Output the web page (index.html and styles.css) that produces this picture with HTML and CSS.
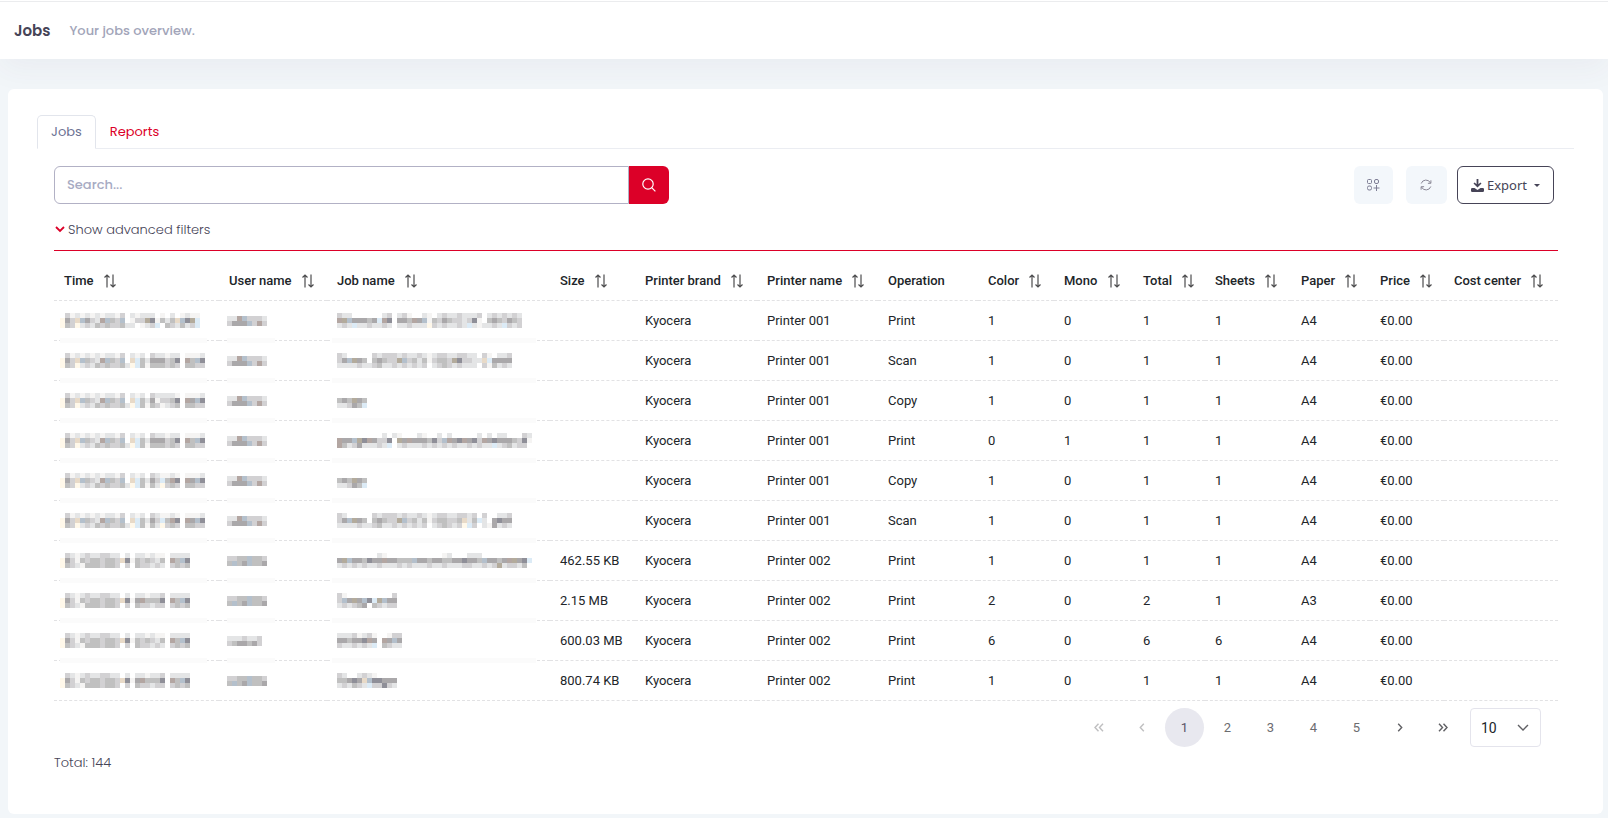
FILE: index.html
```html
<!DOCTYPE html>
<html lang="en">
<head>
  <meta charset="UTF-8">
  <title>Jobs</title>
  <link rel="stylesheet" href="styles.css">
</head>
<body>

  <svg class="sprite" aria-hidden="true">
    <symbol id="sort" viewBox="0 0 14 14">
      <path d="M4 13.5V1M1.500 3.500L4 1l2.500 2.500M10 .5V13M7.500 10.500L10 13l2.500-2.500" fill="none" stroke="currentColor" stroke-width="1.200"/>
    </symbol>
  </svg>

  <header class="subheader">
    <h1>Jobs</h1>
    <span class="subtitle">Your jobs overview.</span>
  </header>

  <main class="card">
    <nav class="tabs">
      <a class="tab active" href="#jobs">Jobs</a>
      <a class="tab" href="#reports">Reports</a>
    </nav>

    <section class="content">
      <div class="toolbar">
        <form class="search">
          <input type="text" id="search" placeholder="Search..." aria-label="Search">
          <button type="button" aria-label="Search">
            <svg width="14" height="14" viewBox="0 0 14 14" fill="none" stroke="#fff" stroke-width="1.200"><circle cx="6" cy="6" r="5.200"/><path d="M9.700 9.700l3.700 3.700"/></svg>
          </button>
        </form>
        <div class="actions">
          <button class="btn-light" type="button" aria-label="Columns">
            <svg width="12" height="12" viewBox="0 0 12 12" fill="none" stroke="#7e7e95"><rect x=".5" y=".5" width="4" height="4" rx="1"/><rect x="7.500" y=".5" width="4" height="4" rx="1.500"/><rect x=".5" y="7" width="4" height="4" rx="1.500"/><path d="M9.500 6v6M6.500 9h6"/></svg>
          </button>
          <button class="btn-light refresh" type="button" aria-label="Refresh">
            <svg width="12" height="12" viewBox="0 0 12 12" fill="none" stroke="#8a8796"><path d="M1.200 4.500A5 5 0 0 1 10.500 4M10.800 7.500A5 5 0 0 1 1.500 8"/><path d="M10.900 1.300v3h-3M1.100 10.700v-3h3"/></svg>
          </button>
          <button class="btn-export" type="button">
            <svg width="13" height="13" viewBox="0 0 13 13" fill="#464457"><path d="M5.600 0h1.800v5.300l2-1.900 1.100 1.200-4 3.900-4-3.900 1.100-1.200 2 1.900z"/><path d="M1.200 9h2.300l3 2 3-2h2.300q1.200 0 1.200 1.200v1.600Q13 13 11.800 13H1.200Q0 13 0 11.800v-1.600Q0 9 1.200 9z"/></svg>
            <span>Export</span>
            <i class="caret"></i>
          </button>
        </div>
      </div>

      <a class="advanced" href="#filters">
        <svg width="10" height="7" viewBox="0 0 10 7" fill="none" stroke="#dc0028" stroke-width="1.800"><path d="M1 1l4 4 4-4"/></svg>
        Show advanced filters
      </a>

      <table class="jobs">
        <colgroup>
          <col class="c-time"><col class="c-user"><col class="c-job"><col class="c-size"><col class="c-brand"><col class="c-printer"><col class="c-op">
          <col class="c-color"><col class="c-mono"><col class="c-total"><col class="c-sheets"><col class="c-paper"><col class="c-price"><col class="c-cost">
        </colgroup>
        <thead>
          <tr>
            <th>Time <svg><use href="#sort"/></svg></th>
            <th>User name <svg><use href="#sort"/></svg></th>
            <th>Job name <svg><use href="#sort"/></svg></th>
            <th>Size <svg><use href="#sort"/></svg></th>
            <th>Printer brand <svg><use href="#sort"/></svg></th>
            <th>Printer name <svg><use href="#sort"/></svg></th>
            <th>Operation</th>
            <th>Color <svg><use href="#sort"/></svg></th>
            <th>Mono <svg><use href="#sort"/></svg></th>
            <th>Total <svg><use href="#sort"/></svg></th>
            <th>Sheets <svg><use href="#sort"/></svg></th>
            <th>Paper <svg><use href="#sort"/></svg></th>
            <th>Price <svg><use href="#sort"/></svg></th>
            <th>Cost center <svg><use href="#sort"/></svg></th>
          </tr>
        </thead>
        <tbody id="rows"></tbody>
      </table>

      <div class="paginator">
        <button type="button" disabled aria-label="First page"><svg width="10" height="9" viewBox="0 0 10 9"><path d="M4.500.8L1 4.500l3.500 3.700M9 .8L5.500 4.500 9 8.200"/></svg></button>
        <button type="button" disabled aria-label="Previous page"><svg width="6" height="9" viewBox="0 0 6 9"><path d="M4.800.8L1.300 4.500l3.500 3.700"/></svg></button>
        <button type="button" class="current">1</button>
        <button type="button">2</button>
        <button type="button">3</button>
        <button type="button">4</button>
        <button type="button">5</button>
        <button type="button" aria-label="Next page"><svg width="6" height="9" viewBox="0 0 6 9"><path d="M1.200.8l3.500 3.700-3.500 3.700"/></svg></button>
        <button type="button" aria-label="Last page"><svg width="10" height="9" viewBox="0 0 10 9"><path d="M1 .8l3.500 3.700L1 8.200M5.500.8L9 4.500 5.500 8.200"/></svg></button>
        <label class="page-size">
          <select aria-label="Rows per page"><option>10</option><option>25</option><option>50</option></select>
          <svg width="12" height="8" viewBox="0 0 12 8"><path d="M1 1l5 5 5-5"/></svg>
        </label>
      </div>

      <div class="total">Total: 144</div>
    </section>
  </main>

  <script src="jobs.js"></script>
</body>
</html>
```

FILE: jobs.js
```js
// Private values are shown as blocks. One letter is one 5px block.
const shades = {
  w: '#f5f4f3', a: '#e4e5e6', b: '#d2d1d3', c: '#c0c0c0', d: '#aaa8aa', e: '#8f8f98',
  y: '#fff8ea', p: '#e8dac8', s: '#dcebf6', l: '#b4c0cc', r: '#b3a6a2', k: '#b3ab9c'
};

const times = {
  t1: ['.bwawawawaawb.awaaa.w.a.waww', 'ydbpldbarlcbl.wbbkewcacpleks', 'ycbyabacbcbbcaa.wabs.cbacabs'],
  t2: ['.bwawawawaawb.awa.baawaa.wwwa', 'ydbplcbarlcbl.pscadddbce.rcle', 'ycbyabacbcbbcayscwcccbcb.ccbb'],
  t3: ['.bwawawawaawb.awa.baaaaw.wwwa', 'ydbplcbarlcbl.pscadwbbce.rdle', 'ycbyabacbcbbcayscwcbwabc.ccbb'],
  t4: ['.bwawawawaawb.awa.bawwaw.wwwa', 'ydbplcbarlcbl.pscadbscre.rdle', 'ycbyabacbcbbcayscwcaybcb.ccbb'],
  t5: ['.bawabaabbaa.a.aawaww.aaaa', 'ydbwcbccbccbpewcbcbac.rcle', 'ycbawcccbccb.b.cbbaba.bcbc'],
  t6: ['.bawabaabbaa.a.aawaab.aaaa', 'ydbwcbccbccbpewdrccce.rcle', 'ycbawcccbccb.b.cbbabb.bcbc']
};

const users = {
  u1: ['aarlbbba', 'bdddlbrb'],
  u2: ['bbcclccb', 'clcdlccd'],
  u3: ['aaabaab', 'bcddcdb']
};

const names = {
  n1: ['baa......ab.abw..aw.abaabaaab.abababa', 'rkldddcdsre.ddcrdlwcbdcbbabew.cdcbdcb', 'abasaabaaba.aabaaaybabaabasawaabasbab'],
  n2: ['ba.....babbbabaabawabbaabbaa.bw.aab', 'bdlkdc.cdcbbklbcacwbccbkebbaapsdddd', 'aaaabaabcaabababab.abcbabaaa.bwcaba'],
  n3: ['......', 'cdckdc', 'aabdcs'],
  n4: ['.........a.aw...aw..a.a.....a.a.aa...ba', 'rddlkerdbbe.kdrdddceblrderdebrdedddcbew', 'rcabdaaabas.abaaababababaababaasabcabb.'],
  n5: ['ba.....babbbabaabawabbaabbab.b..aab', 'bdlkdc.cdcbbklbcacwbccbbcpacsa.dedd', 'aaaabaabcaabababab.abcbabysb.awdaba'],
  n6: ['........aw...........wa...aaa', 'dklddceddrddccclddcddccddeddclddcdrkdes', 'abababaabaaababaaabaabaaabbaababkabbac'],
  n7: ['bw.........b', 'bldkdleskldd', 'ababcd.cbabb'],
  n8: ['aaabwabw..wbb', 'ddcdderd.rdld', 'baababas.cbaa'],
  n9: ['ba..abaw....', 'ccdedpleeddd', 'abacbasbbeba']
};

const jobs = [
  ['t1', 'u1', 'n1', '', '001', 'Print', 1, 0, 1, 1, 'A4'],
  ['t2', 'u1', 'n2', '', '001', 'Scan', 1, 0, 1, 1, 'A4'],
  ['t3', 'u1', 'n3', '', '001', 'Copy', 1, 0, 1, 1, 'A4'],
  ['t2', 'u1', 'n4', '', '001', 'Print', 0, 1, 1, 1, 'A4'],
  ['t4', 'u1', 'n3', '', '001', 'Copy', 1, 0, 1, 1, 'A4'],
  ['t4', 'u1', 'n5', '', '001', 'Scan', 1, 0, 1, 1, 'A4'],
  ['t5', 'u2', 'n6', '462.55 KB', '002', 'Print', 1, 0, 1, 1, 'A4'],
  ['t6', 'u2', 'n7', '2.15 MB', '002', 'Print', 2, 0, 2, 1, 'A3'],
  ['t5', 'u3', 'n8', '600.03 MB', '002', 'Print', 6, 0, 6, 6, 'A4'],
  ['t6', 'u2', 'n9', '800.74 KB', '002', 'Print', 1, 0, 1, 1, 'A4']
];

function blocks(lines) {
  const size = 5;
  const width = Math.max(...lines.map(line => line.length)) * size;
  let rects = '';
  lines.forEach((line, y) => {
    [...line].forEach((letter, x) => {
      if (shades[letter]) {
        rects += `<rect x="${x * size}" y="${y * size}" width="${size}" height="${size}" fill="${shades[letter]}"/>`;
      }
    });
  });
  return `<svg width="${width}" height="${lines.length * size}" shape-rendering="crispEdges">${rects}</svg>`;
}

document.getElementById('rows').innerHTML = jobs.map(job => {
  const [time, user, name, size, printer, ...rest] = job;
  return `
    <tr>
      <td class="hidden-time">${blocks(times[time])}</td>
      <td class="hidden-user">${blocks(users[user])}</td>
      <td class="hidden-name">${blocks(names[name])}</td>
      <td>${size}</td>
      <td>Kyocera</td>
      <td>Printer ${printer}</td>
      ${rest.map(value => `<td>${value}</td>`).join('')}
      <td>€0.00</td>
      <td></td>
    </tr>`;
}).join('');
```

FILE: styles.css
```css
* {
  box-sizing: border-box;
}
body {
  margin: 0;
  background: #f2f6f9;
  color: #464457;
  font: 13px/20px Poppins, Inter, sans-serif;
}
button, input, select {
  font: inherit;
}
a {
  text-decoration: none;
}
.sprite {
  display: none;
}

/* page header */
.subheader {
  display: flex;
  align-items: center;
  gap: 19px;
  height: 59px;
  padding: 3px 14px 0;
  background: linear-gradient(#fff 1px, #ebecee 1px, #ebecee 2px, #fff 2px);
  box-shadow: 0 10px 30px rgba(82, 63, 105, 0.05);
}
.subheader h1 {
  margin: 0;
  font-size: 15px;
  font-weight: 600;
}
.subtitle {
  color: #a2a5b9;
  font-weight: 500;
}

.card {
  position: relative;
  margin: 30px 5px 3px 8px;
  padding: 26px 29px 41px;
  background: #fff;
  border-radius: 6px;
}
.tabs {
  display: flex;
  border-bottom: 1px solid #ebedf2;
}
.tab {
  margin-bottom: -1px;
  padding: 6px 13px;
  border: 1px solid transparent;
  border-radius: 5px 5px 0 0;
  color: #dc0028;
}
.tab.active {
  border-color: #e2e5ec;
  border-bottom-color: #fff;
  background: #fff;
  color: #6c7293;
}
.content {
  padding: 17px 16px 0 17px;
}

/* search and buttons */
.toolbar {
  display: flex;
  justify-content: space-between;
  padding-right: 4px;
}
.search {
  display: flex;
  width: 41%;
  height: 38px;
}
.search input {
  flex: 1;
  min-width: 0;
  padding: 0 12px;
  border: 1px solid #b2b1c5;
  border-radius: 6px 0 0 6px;
}
.search input::placeholder {
  color: #a7abc3;
  font-weight: 500;
}
.search button {
  display: grid;
  place-items: center;
  width: 40px;
  padding: 0;
  border: 0;
  border-radius: 0 6px 6px 0;
  background: #dc0028;
}
.actions {
  display: flex;
}
.btn-light {
  display: grid;
  place-items: center;
  width: 39px;
  padding: 0;
  margin-right: 13px;
  border: 0;
  border-radius: 6px;
  background: #f3f7fb;
}
.btn-light svg {
  overflow: visible;
}
.btn-light.refresh {
  width: 41px;
  margin-right: 10px;
}
.btn-export {
  display: flex;
  align-items: center;
  gap: 3px;
  padding: 0 13px;
  border: 1px solid #464457;
  border-radius: 6px;
  background: #fff;
  color: #464457;
  font-family: "Noto Sans", sans-serif;
}
.caret {
  margin-left: 4px;
  border: 3px solid transparent;
  border-top-color: #464457;
  border-bottom: 0;
}
.advanced {
  display: flex;
  align-items: center;
  gap: 3px;
  height: 47px;
  padding-top: 5px;
  border-bottom: 1px solid #dc0028;
  color: #464457;
  font-weight: 300;
}
.advanced svg {
  margin-left: 1px;
}

/* jobs table */
.jobs {
  width: 100%;
  table-layout: fixed;
  border-spacing: 0;
  color: #212529;
  font: 13px/20px Roboto, sans-serif;
}
.c-time { width: 165px; }
.c-user { width: 108px; }
.c-job { width: 223px; }
.c-size { width: 85px; }
.c-brand { width: 122px; }
.c-printer { width: 121px; }
.c-op { width: 100px; }
.c-color { width: 76px; }
.c-mono { width: 79px; }
.c-total { width: 72px; }
.c-sheets { width: 86px; }
.c-paper { width: 79px; }
.c-price { width: 74px; }
.c-cost { width: 114px; }
.jobs th,
.jobs td {
  height: 40px;
  padding: 0 0 0 10px;
  border-bottom: 1px dashed #e2e2e4;
  text-align: left;
  white-space: nowrap;
}
.jobs th {
  height: 50px;
  padding-top: 10px;
  font-weight: 500;
}
.jobs th svg {
  width: 14px;
  height: 14px;
  margin-left: 6px;
  color: #4c4c4e;
  vertical-align: -3px;
}
.jobs td svg {
  display: block;
}
.jobs td.hidden-time,
.jobs td.hidden-user,
.jobs td.hidden-name {
  position: relative;
}
.jobs td.hidden-time {
  padding-left: 6px;
}
.jobs td.hidden-user {
  padding-left: 8px;
}
/* light strip left over the row line */
.hidden-time::after,
.hidden-user::after,
.hidden-name::after {
  content: "";
  position: absolute;
  bottom: -3px;
  left: 6px;
  width: 147px;
  height: 5px;
  background: #fbfbfb;
}
.hidden-user::after {
  left: 8px;
  width: 48px;
}
.hidden-name::after {
  left: 5px;
  width: 204px;
}
.jobs tr:last-child td::after {
  display: none;
}

/* paging */
.paginator {
  display: flex;
  justify-content: flex-end;
  gap: 4px;
  padding: 7px 17px 0 0;
  font-family: Roboto, sans-serif;
}
.paginator button {
  display: grid;
  place-items: center;
  width: 39px;
  height: 39px;
  padding: 0;
  border: 0;
  border-radius: 50%;
  background: none;
  color: #6c6c70;
}
.paginator button.current {
  background: #e8e8ef;
  color: #5c5468;
}
.paginator button:disabled {
  opacity: 0.4;
}
.paginator svg {
  fill: none;
  stroke: #606064;
  stroke-width: 1.4px;
}
.page-size {
  display: grid;
  align-items: center;
  width: 71px;
  margin-left: 4px;
}
.page-size select,
.page-size svg {
  grid-area: 1 / 1;
}
.page-size select {
  width: 100%;
  height: 39px;
  padding: 0 10px;
  border: 1px solid #e4e4ec;
  border-radius: 4px;
  background: #fff;
  color: #212529;
  font-size: 14px;
  appearance: none;
}
.page-size svg {
  justify-self: end;
  margin-right: 12px;
  pointer-events: none;
}
.total {
  margin-top: 6px;
  color: #464457;
  font-weight: 300;
}
```
